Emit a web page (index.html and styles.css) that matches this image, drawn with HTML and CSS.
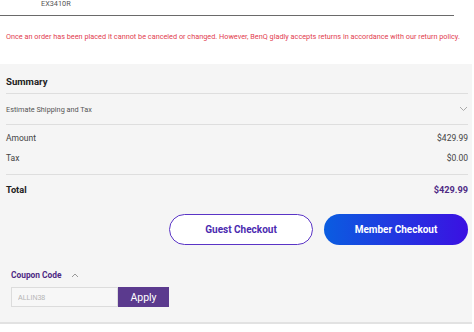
FILE: index.html
```html
<!DOCTYPE html>
<html lang="en">
<head>
  <meta charset="UTF-8">
  <title>Cart Summary</title>
  <link rel="stylesheet" href="styles.css">
</head>
<body>
<div class="item">
  <span class="model">EX3410R</span>
</div>

<p class="notice">Once an order has been placed it cannot be canceled or changed. However, BenQ gladly accepts returns in accordance with our return policy.</p>

<div class="summary">
  <h3>Summary</h3>

  <div class="estimate">
    <span>Estimate Shipping and Tax</span>
    <svg width="9" height="6" viewBox="0 0 9 6"><path d="M1 1l3.5 3.5L8 1" fill="none" stroke="#aaa" stroke-width="1"/></svg>
  </div>

  <div class="lines">
    <div class="row"><span>Amount</span><span>$429.99</span></div>
    <div class="row"><span>Tax</span><span>$0.00</span></div>
  </div>

  <div class="row total"><span>Total</span><span class="price">$429.99</span></div>

  <div class="buttons">
    <button class="guest">Guest Checkout</button>
    <button class="member">Member Checkout</button>
  </div>

  <div class="coupon">
    <div class="coupon-title">
      <span>Coupon Code</span>
      <svg width="8" height="5" viewBox="0 0 8 5"><path d="M1 4l3-3 3 3" fill="none" stroke="#999" stroke-width="1"/></svg>
    </div>
    <div class="coupon-form">
      <input type="text" placeholder="ALLIN38">
      <button class="apply">Apply</button>
    </div>
  </div>
</div>
</body>
</html>
```

FILE: styles.css
```css
body {
  margin: 0;
  font-family: Roboto, "Liberation Sans", sans-serif;
  background: #ffffff;
  color: #333;
}
.item {
  width: 454px;
  height: 15px;
  border-bottom: 1px solid #6a6a6a;
}
.model {
  display: block;
  padding-left: 41px;
  font-size: 7.3px;
  line-height: 8px;
  color: #555;
}
.notice {
  margin: 0;
  padding: 16px 0 0 6px;
  height: 32px;
  font-size: 7.3px;
  line-height: 10px;
  color: #e2404f;
  white-space: nowrap;
}
.summary {
  width: 472px;
  height: 260px;
  box-sizing: border-box;
  background: #f5f5f5;
  padding: 10px 4px 0 6px;
  border-bottom: 2px solid #e2e2e2;
}
h3 {
  margin: 0;
  font-size: 9.6px;
  line-height: 16px;
  font-weight: bold;
  color: #222;
  padding-bottom: 3px;
  border-bottom: 1px solid #dedede;
}
.estimate {
  display: flex;
  justify-content: space-between;
  align-items: center;
  height: 30px;
  font-size: 7.3px;
  color: #555;
  border-bottom: 1px solid #dedede;
}
.lines {
  padding: 3px 0 6px;
  border-bottom: 1px solid #dedede;
}
.row {
  display: flex;
  justify-content: space-between;
  font-size: 8.5px;
  line-height: 20px;
  color: #444;
}
.total {
  font-weight: bold;
  font-size: 9.2px;
  color: #222;
  line-height: 30px;
}
.total .price {
  color: #4e2a84;
}
.buttons {
  display: flex;
  justify-content: flex-end;
  gap: 11px;
  margin-top: 9px;
}
.buttons button {
  width: 144px;
  height: 31px;
  border-radius: 16px;
  font-family: Roboto, "Liberation Sans", sans-serif;
  font-size: 10px;
  font-weight: bold;
}
.guest {
  background: #ffffff;
  border: 1.5px solid #5a34c6;
  color: #4b2bb0;
}
.member {
  border: none;
  color: #ffffff;
  background: linear-gradient(90deg, #0a5de0, #3b10e2);
}
.coupon {
  padding: 25px 0 0 5px;
}
.coupon-title {
  display: flex;
  align-items: center;
  gap: 9px;
  font-size: 8.4px;
  font-weight: bold;
  color: #4e2a84;
}
.coupon-form {
  display: flex;
  margin-top: 7px;
}
.coupon-form input {
  width: 107px;
  height: 20px;
  box-sizing: border-box;
  border: 1px solid #dcdcdc;
  background: #f7f7f7;
  padding: 0 6px;
  font-size: 7px;
  color: #999;
}
.coupon-form input::placeholder {
  color: #b5b5b5;
}
.apply {
  width: 51px;
  height: 20px;
  border: none;
  background: #5b3a8e;
  color: #fff;
  font-family: Roboto, "Liberation Sans", sans-serif;
  font-size: 10.5px;
}
```
